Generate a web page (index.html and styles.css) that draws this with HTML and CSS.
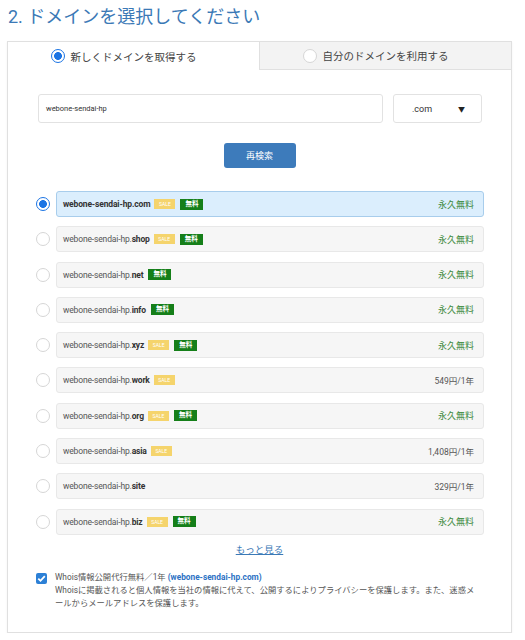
FILE: index.html
```html
<!DOCTYPE html>
<html lang="ja">
<head>
<meta charset="utf-8">
<title>ドメイン選択</title>
<link rel="stylesheet" href="styles.css">
</head>
<body>
<h2 class="title">2. ドメインを選択してください</h2>
<div class="card">
  <div class="tabs">
    <div class="tab tab-active"><span class="radio radio-on"></span><span>新しくドメインを取得する</span></div>
    <div class="tab tab-off"><span class="radio"></span><span>自分のドメインを利用する</span></div>
  </div>
  <div class="search">
    <div class="input">webone-sendai-hp</div>
    <div class="select"><span>.com</span><span class="arrow">▼</span></div>
  </div>
  <div class="btn-wrap"><button class="btn">再検索</button></div>
  <ul class="list">
    <li class="item"><span class="radio radio-on"></span><div class="row row-sel"><span class="dom dom-sel">webone-sendai-hp.com</span><span class="sale">SALE</span><span class="free">無料</span><span class="price free-text">永久無料</span></div></li>
    <li class="item"><span class="radio"></span><div class="row"><span class="dom">webone-sendai-hp.<b>shop</b></span><span class="sale">SALE</span><span class="free">無料</span><span class="price free-text">永久無料</span></div></li>
    <li class="item"><span class="radio"></span><div class="row"><span class="dom">webone-sendai-hp.<b>net</b></span><span class="free">無料</span><span class="price free-text">永久無料</span></div></li>
    <li class="item"><span class="radio"></span><div class="row"><span class="dom">webone-sendai-hp.<b>info</b></span><span class="free">無料</span><span class="price free-text">永久無料</span></div></li>
    <li class="item"><span class="radio"></span><div class="row"><span class="dom">webone-sendai-hp.<b>xyz</b></span><span class="sale">SALE</span><span class="free">無料</span><span class="price free-text">永久無料</span></div></li>
    <li class="item"><span class="radio"></span><div class="row"><span class="dom">webone-sendai-hp.<b>work</b></span><span class="sale">SALE</span><span class="price">549円/1年</span></div></li>
    <li class="item"><span class="radio"></span><div class="row"><span class="dom">webone-sendai-hp.<b>org</b></span><span class="sale">SALE</span><span class="free">無料</span><span class="price free-text">永久無料</span></div></li>
    <li class="item"><span class="radio"></span><div class="row"><span class="dom">webone-sendai-hp.<b>asia</b></span><span class="sale">SALE</span><span class="price">1,408円/1年</span></div></li>
    <li class="item"><span class="radio"></span><div class="row"><span class="dom">webone-sendai-hp.<b>site</b></span><span class="price">329円/1年</span></div></li>
    <li class="item"><span class="radio"></span><div class="row"><span class="dom">webone-sendai-hp.<b>biz</b></span><span class="sale">SALE</span><span class="free">無料</span><span class="price free-text">永久無料</span></div></li>
  </ul>
  <div class="more"><a href="#">もっと見る</a></div>
  <div class="whois">
    <span class="check"><svg width="11" height="11" viewBox="0 0 11 11"><path d="M2.3 5.6 L4.5 7.8 L8.8 3.2" fill="none" stroke="#fff" stroke-width="1.8"/></svg></span>
    <div class="whois-text">
      <div>Whois情報公開代行無料／1年 <b class="whois-dom">(webone-sendai-hp.com)</b></div>
      <div>Whoisに掲載されると個人情報を当社の情報に代えて、公開するによりプライバシーを保護します。また、迷惑メ<br>ールからメールアドレスを保護します。</div>
    </div>
  </div>
</div>
</body>
</html>
```

FILE: styles.css
```css
* { box-sizing: border-box; }
body {
  margin: 0;
  background: #fff;
  font-family: Roboto, "Noto Sans CJK JP", sans-serif;
  color: #444;
}
.title {
  margin: 0;
  padding: 5px 0 0 8px;
  height: 41px;
  font-size: 18px;
  line-height: 24px;
  font-weight: 400;
  color: #3b79b6;
}
.card {
  margin-left: 7px;
  width: 505px;
  height: 592px;
  border: 1px solid #e0e0e0;
  box-shadow: 0 1px 2px rgba(0,0,0,0.06);
}
.tabs {
  display: grid;
  grid-template-columns: 251px 1fr;
  height: 28px;
}
.tab {
  display: flex;
  align-items: center;
  justify-content: center;
  gap: 6px;
  padding-right: 20px;
  font-size: 10.5px;
  color: #444;
}
.tab-off {
  background: #f3f3f3;
  border-left: 1px solid #e0e0e0;
  border-bottom: 1px solid #e0e0e0;
}
.radio {
  flex: none;
  width: 14px;
  height: 14px;
  border-radius: 50%;
  border: 1.5px solid #d6d6d6;
  background: #fff;
}
.radio-on {
  border: 1.5px solid #1b74e4;
  background: radial-gradient(circle, #1b74e4 0 3.6px, #fff 4.2px);
}
.search {
  display: flex;
  gap: 10px;
  padding: 24px 29px 0 30px;
}
.input {
  flex: 1;
  height: 29px;
  border: 1px solid #e2e2e2;
  border-radius: 3px;
  padding-left: 7px;
  display: flex;
  align-items: center;
  font-size: 7.5px;
  color: #333;
}
.select {
  width: 89px;
  height: 29px;
  border: 1px solid #e2e2e2;
  border-radius: 3px;
  display: flex;
  align-items: center;
  padding: 0 16px 0 18px;
  justify-content: space-between;
  font-size: 9px;
  color: #333;
}
.arrow { font-size: 7px; color: #222; }
.btn-wrap {
  display: flex;
  justify-content: center;
  padding-top: 20px;
}
.btn {
  width: 72px;
  height: 25px;
  border: none;
  border-radius: 3px;
  background: #3d7bbb;
  color: #fff;
  font-family: Roboto, "Noto Sans CJK JP", sans-serif;
  font-size: 9px;
  padding: 0;
}
.list {
  list-style: none;
  margin: 0;
  padding: 23px 27px 0 28px;
  display: flex;
  flex-direction: column;
  gap: 9.3px;
}
.item {
  display: flex;
  align-items: center;
  gap: 6px;
}
.row {
  flex: 1;
  height: 26px;
  display: flex;
  align-items: center;
  padding: 0 9px 0 6px;
  background: #f6f6f6;
  border: 1px solid #e8e8e8;
  border-radius: 3px;
}
.row-sel {
  background: #dbeefd;
  border-color: #a8cdec;
}
.dom {
  font-size: 8.5px;
  color: #555;
  letter-spacing: -0.15px;
}
.dom b { color: #333; font-weight: 700; }
.dom-sel { font-weight: 700; color: #333; }
.sale {
  margin-left: 4px;
  width: 21px;
  height: 10px;
  background: #f5d46c;
  color: #fff;
  font-size: 5px;
  line-height: 10px;
  text-align: center;
}
.free {
  margin-left: 5px;
  width: 23px;
  height: 11px;
  background: #157f19;
  color: #fff;
  font-size: 6.5px;
  font-weight: 700;
  line-height: 11px;
  text-align: center;
}
.price {
  margin-left: auto;
  font-size: 8.5px;
  color: #555;
}
.free-text {
  font-size: 9px;
  color: #3d8a3d;
}
.more {
  text-align: center;
  padding-top: 8px;
  font-size: 9.5px;
  line-height: 14px;
}
.more a { color: #3b79b6; }
.whois {
  display: flex;
  gap: 8px;
  padding: 14px 0 0 28px;
  font-size: 8.3px;
  line-height: 13px;
  color: #555;
}
.check {
  flex: none;
  width: 11px;
  height: 11px;
  margin-top: 2px;
  background: #2c80d6;
  border-radius: 2px;
  display: flex;
}
.whois-dom { color: #2c72c4; }
```
